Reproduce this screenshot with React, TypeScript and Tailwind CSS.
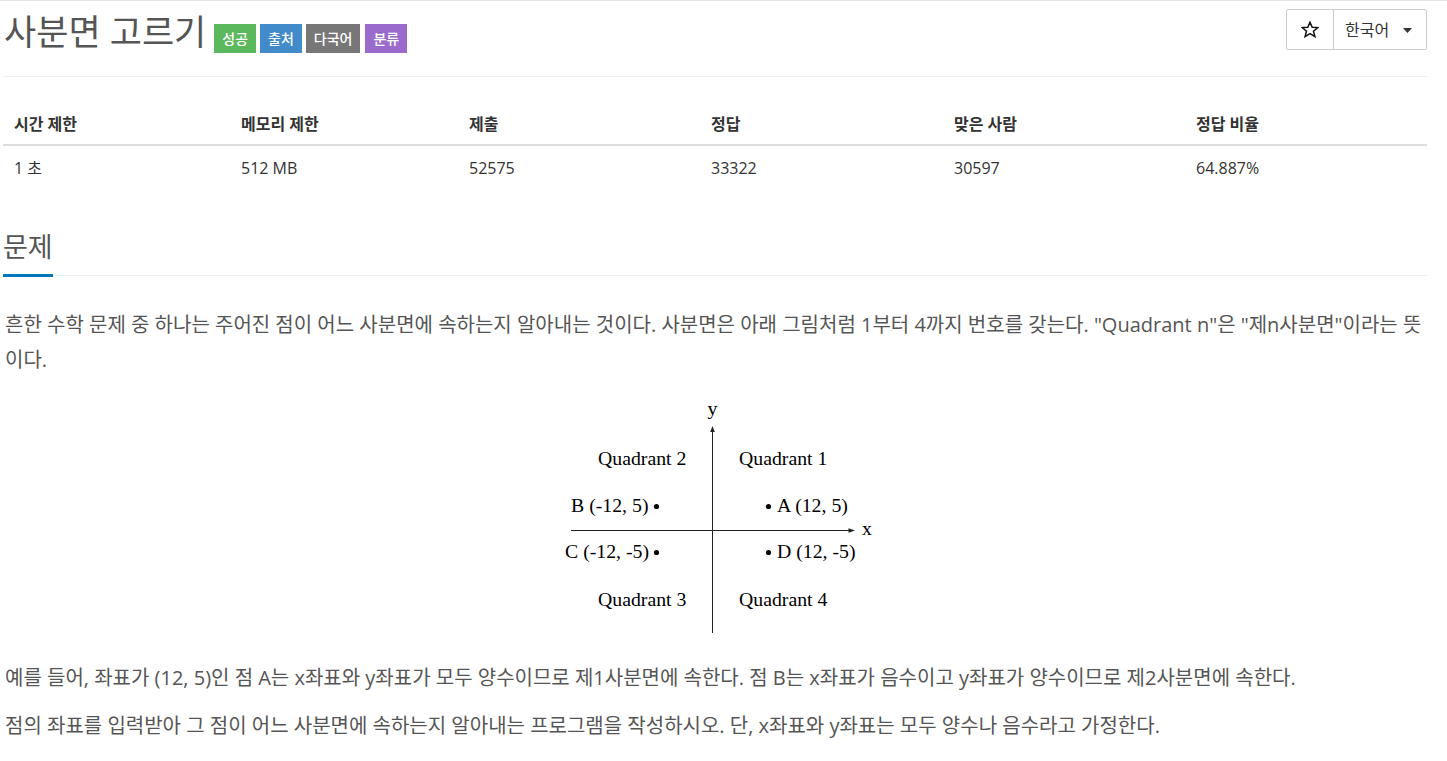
import React from "react";

const font = { fontFamily: "'Open Sans', 'Noto Sans CJK KR', sans-serif" };

function Figure() {
  const t = "'Liberation Serif', 'Times New Roman', serif";
  return (
    <svg width="320" height="248" viewBox="0 0 320 248" className="block ml-[552px]">
      <g stroke="#222" strokeWidth="1" fill="none">
        <line x1="155.5" y1="37" x2="155.5" y2="240" />
        <line x1="14" y1="137.5" x2="293" y2="137.5" />
      </g>
      <polygon points="155.5,33 153.2,39 157.8,39" fill="#222" />
      <polygon points="298,137.5 291.5,135.3 291.5,139.7" fill="#222" />
      <g fontFamily={t} fontSize="19.8" fill="#000">
        <text x="155.5" y="22" textAnchor="middle">y</text>
        <text x="305" y="142">x</text>
        <text x="41" y="72">Quadrant 2</text>
        <text x="182" y="72">Quadrant 1</text>
        <text x="14" y="119">B (-12, 5)</text>
        <text x="220" y="119">A (12, 5)</text>
        <text x="8" y="165">C (-12, -5)</text>
        <text x="220" y="165">D (12, -5)</text>
        <text x="41" y="213">Quadrant 3</text>
        <text x="182" y="213">Quadrant 4</text>
      </g>
      <g fill="#000">
        <circle cx="99.5" cy="113.5" r="2.6" />
        <circle cx="211.5" cy="113.5" r="2.6" />
        <circle cx="99.5" cy="159.5" r="2.6" />
        <circle cx="211.5" cy="159.5" r="2.6" />
      </g>
    </svg>
  );
}

export default function App() {
  const heads = ["시간 제한", "메모리 제한", "제출", "정답", "맞은 사람", "정답 비율"];
  const vals = ["1 초", "512 MB", "52575", "33322", "30597", "64.887%"];
  return (
    <div className="min-h-screen bg-white border-t border-[#e3e3e3]" style={font}>
      <div className="ml-[3px] w-[1424px]">
        {/* header */}
        <div className="flex justify-between items-start h-[76px] border-b border-[#eee]">
          <div className="flex items-start">
            <h1 className="text-[35px] leading-[40px] mt-[11px] ml-[1px] text-[#555] font-normal">사분면 고르기</h1>
            <div className="flex gap-[4px] ml-[8px] mt-[23px]">
              <span className="h-[29px] px-[8px] flex items-center text-[14px] font-medium text-white bg-[#5cb85c]">성공</span>
              <span className="h-[29px] px-[8px] flex items-center text-[14px] font-medium text-white bg-[#428bca]">출처</span>
              <span className="h-[29px] px-[8px] flex items-center text-[14px] font-medium text-white bg-[#777777]">다국어</span>
              <span className="h-[29px] px-[8px] flex items-center text-[14px] font-medium text-white bg-[#9b6bcc] ml-px">분류</span>
            </div>
          </div>
          <div className="flex mt-[8px] h-[41px] border border-[#ccc] rounded-[2px]">
            <div className="w-[47px] flex items-center justify-center border-r border-[#ccc]">
              <svg width="18" height="17" viewBox="0 0 18 17">
                <polygon
                  points="9,1.2 11.2,6.3 16.8,6.6 12.5,10.2 13.9,15.6 9,12.7 4.1,15.6 5.5,10.2 1.2,6.6 6.8,6.3"
                  fill="none"
                  stroke="#111"
                  strokeWidth="1.5"
                  strokeLinejoin="miter"
                />
              </svg>
            </div>
            <div className="w-[92px] flex items-center pl-[11px] text-[16px] text-[#333]">
              <span>한국어</span>
              <svg width="9" height="5" viewBox="0 0 9 5" className="ml-[14px] mt-[2px]">
                <polygon points="0,0 9,0 4.5,5" fill="#333" />
              </svg>
            </div>
          </div>
        </div>

        {/* table */}
        <div className="mt-[19px] text-[16px] text-[#333]">
          <div className="grid grid-cols-[227px_228px_242px_243px_242px_1fr] border-b-2 border-[#ddd]">
            {heads.map((h) => (
              <div key={h} className="pl-[11px] pt-[16px] pb-[8px] leading-[24px] font-bold text-[16px]">
                {h}
              </div>
            ))}
          </div>
          <div className="grid grid-cols-[227px_228px_242px_243px_242px_1fr]">
            {vals.map((v) => (
              <div key={v} className="pl-[11px] py-[10px] leading-[24px]">
                {v}
              </div>
            ))}
          </div>
        </div>

        {/* section heading */}
        <div className="mt-[42px] border-b border-[#eee]">
          <span className="inline-block text-[27px] leading-[30px] text-[#555] pb-[12px] border-b-[3px] border-[#0076c0] -mb-[2px]">
            문제
          </span>
        </div>

        {/* description */}
        <div className="text-[20px] leading-[35px] text-[#555] pl-[2px]">
          <p className="mt-[31px]">
            <span className="whitespace-nowrap">
              흔한 수학 문제 중 하나는 주어진 점이 어느 사분면에 속하는지 알아내는 것이다. 사분면은 아래 그림처럼 1부터 4까지 번호를 갖는다. "Quadrant n"은 "제n사분면"이라는 뜻
            </span>
            <br />
            이다.
          </p>
          <div className="mt-[16px]">
            <Figure />
          </div>
          <p className="mt-[19px]">
            예를 들어, 좌표가 (12, 5)인 점 A는 x좌표와 y좌표가 모두 양수이므로 제1사분면에 속한다. 점 B는 x좌표가 음수이고 y좌표가 양수이므로 제2사분면에 속한다.
          </p>
          <p className="mt-[13px]">
            점의 좌표를 입력받아 그 점이 어느 사분면에 속하는지 알아내는 프로그램을 작성하시오. 단, x좌표와 y좌표는 모두 양수나 음수라고 가정한다.
          </p>
        </div>
      </div>
    </div>
  );
}
